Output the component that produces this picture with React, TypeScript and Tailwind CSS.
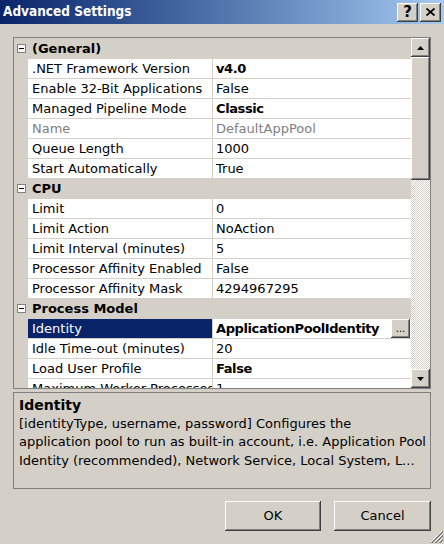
import React from "react";

const raised =
  "bg-[#d4d0c8] shadow-[inset_-1px_-1px_#404040,inset_1px_1px_#ffffff,inset_-2px_-2px_#808080,inset_2px_2px_#d4d0c8]";

type Row =
  | { kind: "cat"; label: string }
  | { kind: "prop"; name: string; value: string; bold?: boolean; grey?: boolean; selected?: boolean };

const rows: Row[] = [
  { kind: "cat", label: "(General)" },
  { kind: "prop", name: ".NET Framework Version", value: "v4.0", bold: true },
  { kind: "prop", name: "Enable 32-Bit Applications", value: "False" },
  { kind: "prop", name: "Managed Pipeline Mode", value: "Classic", bold: true },
  { kind: "prop", name: "Name", value: "DefaultAppPool", grey: true },
  { kind: "prop", name: "Queue Length", value: "1000" },
  { kind: "prop", name: "Start Automatically", value: "True" },
  { kind: "cat", label: "CPU" },
  { kind: "prop", name: "Limit", value: "0" },
  { kind: "prop", name: "Limit Action", value: "NoAction" },
  { kind: "prop", name: "Limit Interval (minutes)", value: "5" },
  { kind: "prop", name: "Processor Affinity Enabled", value: "False" },
  { kind: "prop", name: "Processor Affinity Mask", value: "4294967295" },
  { kind: "cat", label: "Process Model" },
  { kind: "prop", name: "Identity", value: "ApplicationPoolIdentity", bold: true, selected: true },
  { kind: "prop", name: "Idle Time-out (minutes)", value: "20" },
  { kind: "prop", name: "Load User Profile", value: "False", bold: true },
  { kind: "prop", name: "Maximum Worker Processes", value: "1" },
];

function MinusBox() {
  return (
    <svg width="9" height="9" viewBox="0 0 9 9" className="block">
      <rect x="0.5" y="0.5" width="8" height="8" fill="#ffffff" stroke="#808080" />
      <line x1="2" y1="4.5" x2="7" y2="4.5" stroke="#000000" />
    </svg>
  );
}

function Arrow({ up }: { up: boolean }) {
  return (
    <svg width="7" height="4" viewBox="0 0 7 4" className="block">
      {up ? <polygon points="3.5,0 7,4 0,4" fill="#000" /> : <polygon points="0,0 7,0 3.5,4" fill="#000" />}
    </svg>
  );
}

export default function App() {
  return (
    <div
      className="w-[444px] h-[544px] bg-[#d4d0c8] flex flex-col overflow-hidden relative text-[13px] text-black"
      style={{ fontFamily: "'DejaVu Sans', sans-serif" }}
    >
      {/* Title bar */}
      <div className="h-[24px] bg-linear-to-r from-[#0a246a] to-[#a6caf0] flex items-center pl-[3px] pr-[3px]">
        <div
          className="text-white font-bold text-[13.5px] flex-1 leading-none"
          style={{ fontFamily: "'DejaVu Sans Condensed', 'DejaVu Sans', sans-serif" }}
        >
          Advanced Settings
        </div>
        <div className="flex gap-[2px]">
          <div className={`${raised} w-[21px] h-[19px] flex items-center justify-center font-bold text-[15px] leading-none`}>
            ?
          </div>
          <div className={`${raised} w-[21px] h-[19px] flex items-center justify-center`}>
            <svg width="9" height="8" viewBox="0 0 9 8">
              <path d="M0.5 0.5 L8.5 7.5 M8.5 0.5 L0.5 7.5" stroke="#000" strokeWidth="1.7" />
            </svg>
          </div>
        </div>
      </div>

      {/* Property grid */}
      <div className="mt-[13px] ml-[13px] w-[418px] h-[352px] border border-[#808080] flex">
        <div className="flex-1 overflow-hidden flex flex-col">
          {rows.map((r, i) =>
            r.kind === "cat" ? (
              <div key={i} className="h-[20px] shrink-0 flex items-center bg-[#d4d0c8]">
                <div className="w-[14px] h-full flex items-center justify-end pr-[2px]">
                  <MinusBox />
                </div>
                <div className="pl-[4px] font-bold text-[13px] leading-none">{r.label}</div>
              </div>
            ) : (
              <div key={i} className="h-[20px] shrink-0 flex bg-[#d4d0c8]">
                <div className="w-[14px]" />
                <div className="flex-1 flex border-t border-[#d4d0c8] bg-white">
                  <div
                    className={`w-[184px] flex items-center pl-[4px] whitespace-nowrap overflow-hidden leading-none ${
                      r.selected ? "bg-[#0a246a] text-white" : r.grey ? "text-[#808080]" : ""
                    }`}
                  >
                    {r.name}
                  </div>
                  <div className="w-[1px] bg-[#d4d0c8]" />
                  <div
                    className={`flex-1 flex items-center pl-[3px] whitespace-nowrap overflow-hidden leading-none relative ${
                      r.bold ? "font-bold tracking-[-0.4px]" : ""
                    } ${r.grey ? "text-[#808080]" : ""}`}
                  >
                    {r.value}
                    {r.selected && (
                      <div className={`${raised} absolute right-[1px] top-0 w-[19px] h-[19px] flex items-end justify-center pb-[4px] text-[10px] font-normal tracking-normal leading-none`}>
                        ...
                      </div>
                    )}
                  </div>
                </div>
              </div>
            )
          )}
        </div>
        {/* Scrollbar */}
        <div className="w-[19px] flex flex-col">
          <div className={`${raised} h-[19px] flex items-center justify-center`}>
            <Arrow up />
          </div>
          <div className={`${raised} h-[123px]`} />
          <div className="flex-1 bg-[repeating-conic-gradient(#d4d0c8_0_25%,#ffffff_0_50%)] bg-[length:2px_2px]" />
          <div className={`${raised} h-[19px] flex items-center justify-center`}>
            <Arrow up={false} />
          </div>
        </div>
      </div>

      {/* Description panel */}
      <div className="mt-[3px] ml-[13px] w-[418px] h-[97px] border border-[#808080] pl-[5px] pt-[3px] leading-[18.5px] whitespace-nowrap overflow-hidden">
        <div className="font-bold text-[14px]">Identity</div>
        <div>[identityType, username, password] Configures the</div>
        <div>application pool to run as built-in account, i.e. Application Pool</div>
        <div>Identity (recommended), Network Service, Local System, L...</div>
      </div>

      {/* Buttons */}
      <div className="mt-[12px] flex pl-[225px] gap-[13px]">
        <div className={`${raised} w-[96px] h-[30px] flex items-center justify-center`}>OK</div>
        <div className={`${raised} w-[97px] h-[30px] flex items-center justify-center`}>Cancel</div>
      </div>

      {/* Resize grip */}
      <svg width="13" height="13" viewBox="0 0 13 13" className="absolute right-[1px] bottom-[1px]">
        <path d="M12 1 L1 12 M12 5 L5 12 M12 9 L9 12" stroke="#ffffff" />
        <path d="M13 1 L1 13 M13 2 L2 13 M13 5 L5 13 M13 6 L6 13 M13 9 L9 13 M13 10 L10 13" stroke="#808080" />
      </svg>
    </div>
  );
}
